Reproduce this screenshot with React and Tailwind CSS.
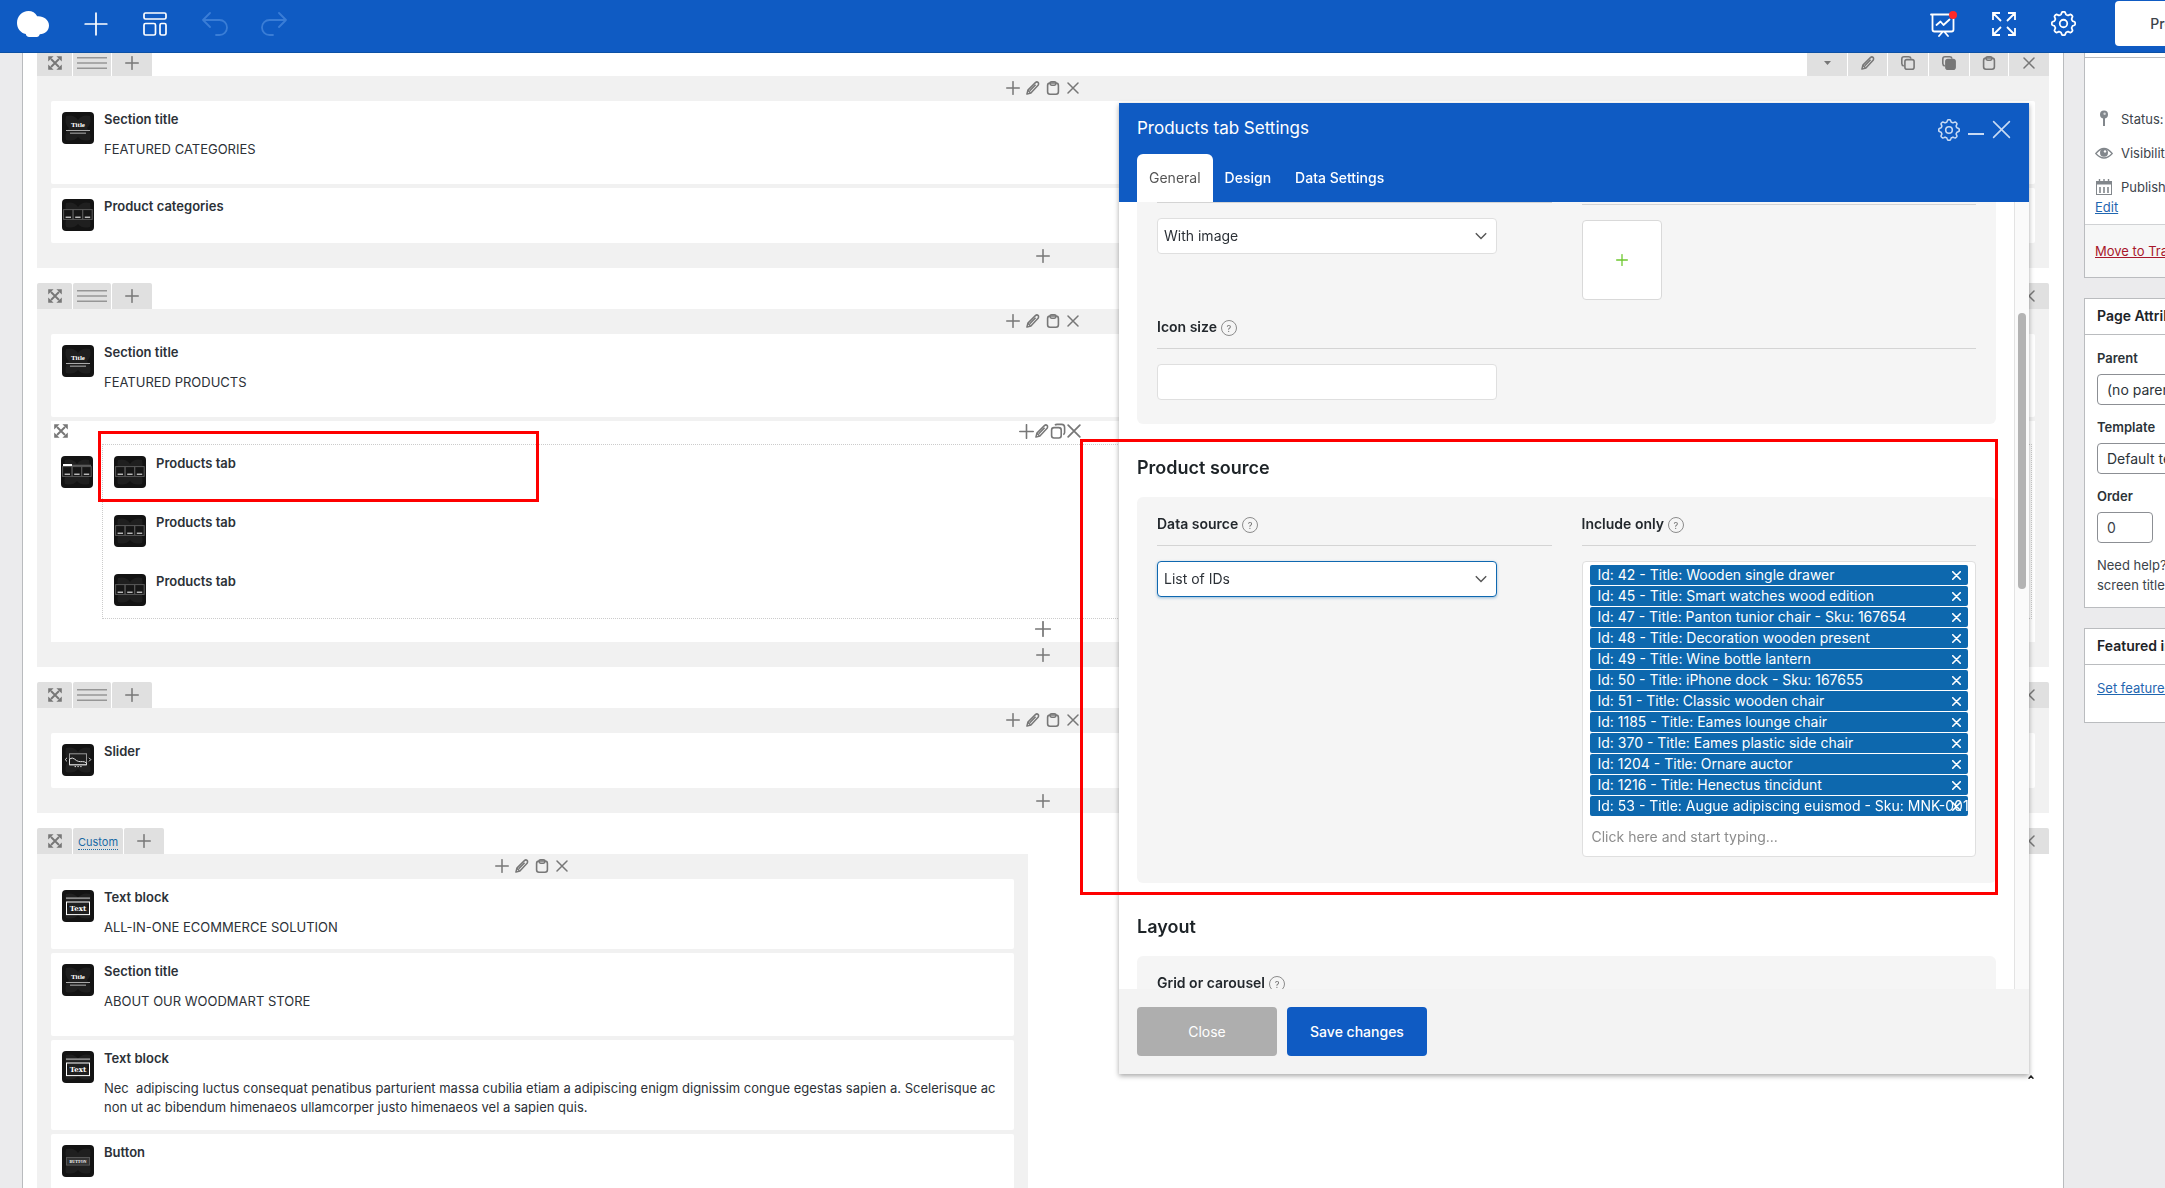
import React from 'react';

const PRODUCTS = [
  'Id: 42 - Title: Wooden single drawer',
  'Id: 45 - Title: Smart watches wood edition',
  'Id: 47 - Title: Panton tunior chair - Sku: 167654',
  'Id: 48 - Title: Decoration wooden present',
  'Id: 49 - Title: Wine bottle lantern',
  'Id: 50 - Title: iPhone dock - Sku: 167655',
  'Id: 51 - Title: Classic wooden chair',
  'Id: 1185 - Title: Eames lounge chair',
  'Id: 370 - Title: Eames plastic side chair',
  'Id: 1204 - Title: Ornare auctor',
  'Id: 1216 - Title: Henectus tincidunt',
  'Id: 53 - Title: Augue adipiscing euismod - Sku: MNK-001',
];

// Eight rounded teeth around a 24x24 box
const GEAR_PATH = (() => {
  const points = [];
  for (let i = 0; i < 96; i++) {
    const angle = (i / 96) * Math.PI * 2;
    const wave = Math.max(-0.75, Math.min(0.75, Math.cos(angle * 8) * 1.2));
    const r = 10 + wave * 1.6;
    points.push(`${(12 + r * Math.cos(angle)).toFixed(2)} ${(12 + r * Math.sin(angle)).toFixed(2)}`);
  }
  return `M${points.join('L')}Z`;
})();

function Gear({ className }) {
  return (
    <svg className={className} viewBox="0 0 24 24" fill="none" stroke="currentColor" strokeWidth="1.7" strokeLinejoin="round">
      <path d={GEAR_PATH} />
      <circle cx="12" cy="12" r="3.6" />
    </svg>
  );
}

function Plus({ className = 'size-[14px]' }) {
  return (
    <svg className={className} viewBox="0 0 14 14" stroke="currentColor" strokeWidth="1.5" strokeLinecap="round">
      <path d="M7 .7v12.6M.7 7h12.6" />
    </svg>
  );
}

function Cross({ className = 'size-3' }) {
  return (
    <svg className={className} viewBox="0 0 12 12" stroke="currentColor" strokeWidth="1.5" strokeLinecap="round">
      <path d="M1 1l10 10M11 1L1 11" />
    </svg>
  );
}

function Pencil({ className = 'size-[14px]' }) {
  return (
    <svg className={className} viewBox="0 0 14 14" fill="none" stroke="currentColor" strokeWidth="1.5" strokeLinejoin="round">
      <path d="M.9 13.1l1-4L9.4 1.6q1.5-1.3 2.6-.2t.1 2.9L4.900 12z" />
      <path d="M3.800 9.800l5.800-6M2 9.400l2.400 2.400" />
    </svg>
  );
}

function Clipboard({ className = 'size-[14px]' }) {
  return (
    <svg className={className} viewBox="0 0 14 14" fill="none" stroke="currentColor" strokeWidth="1.6">
      <rect x="1.6" y="2" width="10.8" height="11.2" rx="2.4" />
      <rect x="4" y=".8" width="6" height="3.4" rx="1.6" />
    </svg>
  );
}

function Copy({ filled }) {
  return (
    <svg className="size-[14px]" viewBox="0 0 14 14" fill="none" stroke="currentColor" strokeWidth="1.6">
      <path d="M2.8 10Q.8 9.6.8 7.6V3Q.8.8 3 .8h4.6Q9.6.8 10 2.6" />
      <rect x="3.9" y="3.6" width="9.2" height="9.6" rx="2" fill={filled ? 'currentColor' : 'none'} />
    </svg>
  );
}

function Stack() {
  return (
    <svg className="size-4" viewBox="0 0 16 16" fill="none" stroke="currentColor" strokeWidth="1.6">
      <rect x="1.6" y="4.6" width="9.6" height="10.4" rx="2.4" />
      <path d="M5 2.2Q5.6 1.4 7 1.4h4.6q3 0 3 3v5q0 1.6-1.4 2.2" />
    </svg>
  );
}

function Move() {
  return (
    <svg className="size-[14px]" viewBox="0 0 14 14" fill="currentColor" stroke="currentColor">
      <path d="M3 3l8 8M11 3l-8 8" strokeWidth="1.9" fill="none" />
      <path stroke="none" d="M.2.2h5.400L.2 5.600zM13.800.2v5.400L8.400.2zM.2 13.800V8.400l5.400 5.400zM13.800 13.800H8.400l5.400-5.400z" />
    </svg>
  );
}

function Chevron({ className }) {
  return (
    <svg className={className} viewBox="0 0 12 8" fill="none" stroke="currentColor" strokeWidth="1.4">
      <path d="M.8 1.2L6 6.6l5.2-5.4" />
    </svg>
  );
}

function Boxes({ y = 10 }) {
  return (
    <g>
      {[1.6, 11.2, 20.8].map((x) => (
        <g key={x}>
          <rect x={x} y={y + 0.6} width="9.4" height="9.8" fill="#161616" stroke="#5a5a5a" />
          <path d={`M${x + 2} ${y + 8.2}h5.4`} stroke="#eee" strokeWidth="1.1" />
        </g>
      ))}
    </g>
  );
}

function Tile({ kind }) {
  return (
    <svg className="size-8 shrink-0" viewBox="0 0 32 32" fill="none" aria-hidden="true">
      <rect width="32" height="32" rx="4" fill="#131313" />
      <path d="M4 4q8-2 12 4 4-6 12-4 2 8-3 12 5 6 3 12-8 2-12-3-4 5-12 3-2-6 3-12Q2 12 4 4z" fill="#1f1f1f" />
      {kind === 'title' && (
        <g>
          <text x="16" y="15" fontSize="7" fontWeight="700" textAnchor="middle" fill="#fff" fontFamily="Liberation Serif, serif">Title</text>
          <path d="M4 18.5h24" stroke="#aaa" />
          <path d="M8 21.2h16" stroke="#888" strokeWidth="1.4" />
        </g>
      )}
      {kind === 'products' && <Boxes />}
      {kind === 'tabs' && (
        <g>
          <path d="M11 9.4h19" stroke="#5a5a5a" strokeWidth="1.4" />
          <path d="M2 9h9" stroke="#fff" strokeWidth="2" />
          <Boxes />
        </g>
      )}
      {kind === 'slider' && (
        <g stroke="#ddd">
          <rect x="7.5" y="9.8" width="17" height="11" stroke="#999" />
          <path d="M7.5 15q3-2 5 0t4 2.4 4 .2 4 1.4M7.500 15v5.800h17v-2" />
          <path d="M5 13.800l-1.800 1.800L5 17.400M27 13.800l1.800 1.800-1.800 1.800" />
          <path d="M12.600 22.600h1.400M15.400 22.600h1.400M18.200 22.600h1.400" />
        </g>
      )}
      {kind === 'text' && (
        <g>
          <path d="M4 8.2h24" stroke="#888" strokeWidth="1.8" />
          <rect x="4.5" y="12" width="23" height="12.6" stroke="#fff" />
          <text x="16" y="21" fontSize="7" fontWeight="700" textAnchor="middle" fill="#fff" fontFamily="DejaVu Serif, serif">Text</text>
        </g>
      )}
      {kind === 'button' && (
        <g>
          <rect x="4.5" y="12.5" width="23" height="7.6" fill="#333" stroke="#555" />
          <text x="16" y="18" fontSize="4" fontWeight="700" textAnchor="middle" fill="#fff" fontFamily="Liberation Serif, serif">BUTTON</text>
        </g>
      )}
    </svg>
  );
}

function ControlButton({ label, className = '', children }) {
  return (
    <button type="button" aria-label={label} className={`flex h-[26px] items-center justify-center rounded-t-xs bg-[#e0e0e0] text-[#777] ${className}`}>
      {children}
    </button>
  );
}

function RowControls({ custom }) {
  return (
    <div className="flex justify-between">
      <div className="flex gap-px">
        <ControlButton label="Drag row" className="w-[35px]"><Move /></ControlButton>
        {custom ? (
          <ControlButton label="Custom layout" className="w-[50px]">
            <span className="mt-[2px] border-b border-dotted border-[#1a6aa5] text-[11px] leading-[14px] text-[#1a6aa5]">Custom</span>
          </ControlButton>
        ) : (
          <ControlButton label="Row layout" className="w-[38px]">
            <svg className="h-[14px] w-[30px]" viewBox="0 0 30 14" stroke="#969696" strokeWidth="1.4">
              <path d="M0 1.8h30M0 7h30M0 12.2h30" />
            </svg>
          </ControlButton>
        )}
        <ControlButton label="Add column" className="w-10"><Plus /></ControlButton>
      </div>
      <div className="flex gap-px">
        <ControlButton label="Toggle row" className="w-10">
          <svg className="h-1 w-[7px]" viewBox="0 0 7 4" fill="currentColor"><path d="M0 0h7L3.500 4z" /></svg>
        </ControlButton>
        <ControlButton label="Edit row" className="w-[39px]"><Pencil /></ControlButton>
        <ControlButton label="Clone row" className="w-10"><Copy /></ControlButton>
        <ControlButton label="Copy row" className="w-10"><Copy filled /></ControlButton>
        <ControlButton label="Paste" className="w-[38px]"><Clipboard /></ControlButton>
        <ControlButton label="Delete row" className="w-10"><Cross /></ControlButton>
      </div>
    </div>
  );
}

function Column({ children, open }) {
  return (
    <div className="bg-[#f1f1f1] px-[14px] text-[#777]">
      <div className="flex h-[25px] items-center justify-center gap-[6px] pr-[2px] pb-[2px]">
        <button type="button" aria-label="Prepend element"><Plus /></button>
        <button type="button" aria-label="Edit column"><Pencil /></button>
        <button type="button" aria-label="Paste into column"><Clipboard /></button>
        <button type="button" aria-label="Delete column" className="pl-px"><Cross /></button>
      </div>
      <div className="flex flex-col gap-1">{children}</div>
      <div className="flex h-[25px] items-center justify-center">
        {!open && <button type="button" aria-label="Append element"><Plus /></button>}
      </div>
    </div>
  );
}

function Element({ kind, title, text, className = '' }) {
  return (
    <div className={`flex gap-[10px] rounded-xs bg-white px-[11px] text-[13px] text-[#2c3137] ${className}`}>
      <div className="pt-[11px] pb-3"><Tile kind={kind} /></div>
      <div className="pt-2">
        <h4 className="leading-5 font-semibold">{title}</h4>
        {text && <p className="mt-[11px] leading-[19px]">{text}</p>}
      </div>
    </div>
  );
}

function ProductTabs() {
  return (
    <div className="bg-white px-[3px]">
      <div className="flex h-[23px] items-center pb-[3px]">
        <div className="flex flex-1"><Move /></div>
        <div className="flex items-center gap-px pl-[14px]">
          <Plus className="size-[15px]" />
          <Pencil className="size-[14px]" />
          <Stack />
          <Cross className="size-[14px]" />
        </div>
        <div className="flex-1" />
      </div>
      <div className="flex gap-[9px] pl-[7px]">
        <div className="pt-3"><Tile kind="tabs" /></div>
        <div className="flex flex-1 flex-col gap-1 border border-dotted border-[#ccc]">
          <Element kind="products" title="Products tab" />
          <Element kind="products" title="Products tab" />
          <Element kind="products" title="Products tab" />
        </div>
      </div>
      <div className="flex h-[23px] items-center justify-center pb-[3px]"><Plus className="size-4" /></div>
    </div>
  );
}

function TopBar() {
  return (
    <header className="relative z-10 flex h-[53px] shrink-0 items-center justify-between overflow-hidden border-b border-[#0b50a5] bg-[#0f5bc3] pb-[5px] text-white">
      <div className="flex items-center gap-[35px] pl-[17px]">
        <a href="#home" aria-label="Home">
          <svg className="h-[26px] w-8" viewBox="0 0 32 26" fill="#fff">
            <path d="M11.500 0c3.700 0 7 1.900 8.700 5.200C26 4.600 32 8.400 32 14.500c0 5-4 8.700-9.200 8.700-.5 1.600-1.500 2.800-3 2.800h-7.600c-2 0-3.200-1.200-3.400-2.900C3.800 22 0 17.500 0 12 0 5.300 5 0 11.500 0z" />
          </svg>
        </a>
        <button type="button" aria-label="Add element"><Plus className="size-6 [stroke-width:1]" /></button>
        <button type="button" aria-label="Templates">
          <svg className="size-6" viewBox="0 0 24 24" fill="none" stroke="currentColor" strokeWidth="1.7">
            <rect x="1" y="1" width="22" height="6" rx="1.5" />
            <rect x="1" y="11.500" width="11.500" height="11.500" rx="1.500" />
            <rect x="17" y="11.500" width="6" height="11.500" rx="1.500" />
          </svg>
        </button>
        <div className="flex gap-[33px] text-[#3a7dd6]">
          <button type="button" aria-label="Undo">
            <svg className="h-6 w-[26px]" viewBox="0 0 26 24" fill="none" stroke="currentColor" strokeWidth="1.8" strokeLinecap="round" strokeLinejoin="round">
              <path d="M8 1L1 8l7 7M1 8h16.500a7.500 7.500 0 0 1 0 15H14" />
            </svg>
          </button>
          <button type="button" aria-label="Redo">
            <svg className="h-6 w-[26px]" viewBox="0 0 26 24" fill="none" stroke="currentColor" strokeWidth="1.8" strokeLinecap="round" strokeLinejoin="round">
              <path d="M18 1l7 7-7 7M25 8H8.500a7.500 7.500 0 0 0 0 15H12" />
            </svg>
          </button>
        </div>
      </div>
      <div className="flex items-center gap-[35px]">
        <button type="button" aria-label="SEO">
          <svg className="h-[26px] w-[27px]" viewBox="0 0 27 26" fill="none" stroke="currentColor" strokeWidth="1.800" strokeLinecap="round" strokeLinejoin="round">
            <path d="M1 3.500h20M2.500 3.500v15q0 2 2 2h17q2 0 2-2V8M9 25l3.500-4M18 25l-3.500-4" />
            <path d="M6.500 14l4-3.500 3 3.500 6-5.500" />
            <circle cx="23" cy="4" r="4" fill="#ff2a2a" stroke="none" />
          </svg>
        </button>
        <button type="button" aria-label="Full screen">
          <svg className="size-6" viewBox="0 0 24 24" fill="none" stroke="currentColor" strokeWidth="1.800">
            <path d="M1 8V1h7M1 1l8 8M16 1h7v7M23 1l-8 8M1 16v7h7M1 23l8-8M23 16v7h-7M23 23l-8-8" />
          </svg>
        </button>
        <button type="button" aria-label="Page settings"><Gear className="size-[25px]" /></button>
        <div className="ml-1 w-[50px]">
          <button type="button" className="h-[45px] w-[124px] rounded-sm bg-white text-[14px] font-medium text-[#3c434a]">Preview</button>
        </div>
      </div>
    </header>
  );
}

function Label({ htmlFor, children }) {
  return (
    <div className="flex items-center gap-1 border-b border-[#d4d4d4] pb-3">
      <label htmlFor={htmlFor} className="text-[14px] leading-[18px] font-semibold text-[#23282d]">{children}</label>
      <span className="mt-[2px] flex size-4 items-center justify-center rounded-full border border-[#8c8c8c] text-[9px] leading-none font-medium text-[#777]">?</span>
    </div>
  );
}

function Select({ id, label, value, className = '' }) {
  return (
    <div className="relative w-[340px] max-w-full">
      <select id={id} aria-label={label} className={`h-9 w-full appearance-none rounded-sm border bg-white px-[6px] pb-px text-[14px] text-[#2c3137] ${className}`}>
        <option>{value}</option>
      </select>
      <Chevron className="pointer-events-none absolute top-[14px] right-[10px] h-2 w-3 text-[#555]" />
    </div>
  );
}

function SettingsModal() {
  return (
    <section role="dialog" aria-label="Products tab Settings" className="fixed top-[103px] right-[136px] bottom-[114px] z-20 flex w-[910px] flex-col bg-white shadow-[0_2px_5px_rgba(0,0,0,0.35)]">
      <div className="bg-[#0f5bc3] px-[18px] text-white">
        <div className="flex h-[51px] items-center justify-between pb-[2px]">
          <h2 className="text-[17px] leading-6">Products tab Settings</h2>
          <div className="flex items-center gap-2 pt-1 text-[#c8daf3]">
            <button type="button" aria-label="Settings"><Gear className="size-[22px]" /></button>
            <button type="button" aria-label="Minimize" className="mt-2 h-[2px] w-4 bg-current" />
            <button type="button" aria-label="Close"><Cross className="size-[19px] [stroke-width:1]" /></button>
          </div>
        </div>
        <div role="tablist" className="flex text-[14px] font-medium">
          <button type="button" role="tab" aria-selected="true" className="h-12 rounded-t-md bg-white px-3 pb-[2px] font-normal text-[#555]">General</button>
          <button type="button" role="tab" aria-selected="false" className="h-12 px-3 pb-[2px]">Design</button>
          <button type="button" role="tab" aria-selected="false" className="h-12 px-3 pb-[2px]">Data Settings</button>
        </div>
      </div>

      <div className="flex min-h-0 flex-1">
        <div className="min-w-0 flex-1 overflow-hidden px-[18px]">
          <div className="rounded-b-md bg-[#f5f5f5] px-5 pb-6">
            <div className="grid grid-cols-2 gap-[30px]">
              <div className="border-t border-[#d4d4d4] pt-[15px]">
                <Select label="Title icon" value="With image" className="border-[#dfdfdf]" />
              </div>
              <div className="pt-[2px]">
                <div className="border-t border-[#d4d4d4] pt-[15px]">
                  <button type="button" aria-label="Add image" className="flex size-20 items-center justify-center rounded-sm border border-[#d9d9d9] bg-white text-[#6dc72f]">
                    <Plus className="size-3" />
                  </button>
                </div>
              </div>
            </div>
            <div className="pt-[18px]">
              <Label htmlFor="icon-size">Icon size</Label>
              <input id="icon-size" type="text" className="mt-[15px] h-9 w-[340px] rounded-sm border border-[#dfdfdf] bg-white px-[6px] text-[14px]" />
            </div>
          </div>

          <h3 className="pt-8 pb-[17px] text-[18px] leading-6 font-semibold text-[#1d2327]">Product source</h3>
          <div className="grid grid-cols-2 gap-[30px] rounded-md bg-[#f5f5f5] px-5 pt-[18px] pb-[26px]">
            <div>
              <Label htmlFor="data-source">Data source</Label>
              <div className="pt-[15px]">
                <Select id="data-source" value="List of IDs" className="border-[#0f68b0] shadow-[0_1px_3px_rgba(15,104,176,0.4)]" />
              </div>
            </div>
            <div>
              <Label htmlFor="include-only">Include only</Label>
              <div className="mt-[15px] rounded-sm border border-[#dfdfdf] bg-white px-[7px] pt-[3px]">
                <ul className="flex flex-col gap-px">
                  {PRODUCTS.map((product) => (
                    <li key={product} className="relative flex h-5 items-center rounded-xs bg-[#0d68ae] pl-2 text-[14px] leading-5 whitespace-nowrap text-white">
                      {product}
                      <button type="button" aria-label="Remove" className="absolute top-[6px] right-[7px]">
                        <Cross className="size-[9px] [stroke-width:2.200]" />
                      </button>
                    </li>
                  ))}
                </ul>
                <input id="include-only" type="text" placeholder="Click here and start typing..." className="h-10 w-full px-[2px] text-[14px] placeholder:text-[#8c8c8c]" />
              </div>
            </div>
          </div>

          <h3 className="pt-8 pb-[17px] text-[18px] leading-6 font-semibold text-[#1d2327]">Layout</h3>
          <div className="rounded-md bg-[#f5f5f5] px-5 pt-[18px] pb-6">
            <Label htmlFor="grid-or-carousel">Grid or carousel</Label>
            <div className="pt-[15px]">
              <Select id="grid-or-carousel" value="Grid" className="border-[#dfdfdf]" />
            </div>
          </div>
        </div>
        <div className="w-[15px] border-l border-[#e3e3e3] bg-[#fafafa] px-[3px] pt-[111px]">
          <div className="h-[276px] rounded-full bg-[#b3b3b3]" />
        </div>
      </div>

      <div className="flex gap-[10px] bg-[#f3f3f3] px-[18px] py-[18px] text-[14px] text-white">
        <button type="button" className="h-[49px] w-[140px] rounded-sm bg-[#aeaeae]">Close</button>
        <button type="button" className="h-[49px] w-[140px] rounded-sm bg-[#0f5bc3] font-medium">Save changes</button>
      </div>
      <svg className="absolute -right-[5px] -bottom-[5px] h-1 w-[6px]" viewBox="0 0 6 4" fill="none" stroke="#222" strokeWidth="1.500"><path d="M.6 3.700L3 1l2.400 2.700" /></svg>
    </section>
  );
}

function SidebarSelect({ id, label, value }) {
  return (
    <div className="flex flex-col">
      <label htmlFor={id} className="mb-[6px] leading-5 font-semibold text-[#2c3338]">{label}</label>
      <select id={id} className="h-[31px] w-[254px] appearance-none rounded-sm border border-[#8c8f94] bg-white px-[9px] text-[14px] text-[#2c3338]">
        <option>{value}</option>
      </select>
    </div>
  );
}

function Sidebar() {
  return (
    <aside className="w-[101px] shrink-0 overflow-hidden pl-5 text-[13px] text-[#3c434a]">
      <div className="flex w-[280px] flex-col gap-5">
        <div className="border border-t-0 border-[#babcbf] bg-white">
          <div className="h-2 border-b border-[#babcbf]" />
          <div className="px-[10px] pt-[51px] pb-[7px] leading-5">
            <ul className="flex flex-col gap-[14px]">
              <li className="flex gap-2">
                <svg className="h-[18px] w-[18px]" viewBox="0 0 18 18" fill="#82878c"><circle cx="9" cy="5.500" r="4" /><path d="M8 9h2v8H8z" /><circle cx="9.600" cy="4.800" r="1.200" fill="#d5d7d9" /></svg>
                Status: Published
              </li>
              <li className="flex items-center gap-2">
                <svg className="h-[18px] w-[18px]" viewBox="0 0 18 18" fill="none" stroke="#82878c" strokeWidth="1.300"><path d="M.8 9.500Q9-.5 17.200 9.500 9 18.500.8 9.500z" /><circle cx="9" cy="8.800" r="4" fill="#82878c" stroke="none" /><circle cx="10" cy="7.400" r="1.200" fill="#fff" stroke="none" /></svg>
                Visibility: Public
              </li>
              <li className="flex items-center gap-2">
                <svg className="h-[18px] w-[18px]" viewBox="0 0 18 18" fill="none" stroke="#82878c"><rect x="1.500" y="3.500" width="15" height="13" /><path d="M1 5h16" strokeWidth="3" /><path d="M4.500 1v4M9 1v4M13.500 1v4" strokeWidth="1.400" /><path d="M5 9v6M9 9v6M13 9v6" strokeWidth="1.600" /></svg>
                Published on: Jul 5, 2021
              </li>
            </ul>
            <a href="#edit" className="text-[#1f66b0] underline">Edit</a>
          </div>
          <div className="border-t border-[#d0d2d4] bg-[#f6f7f7] px-[10px] py-4 leading-5">
            <a href="#trash" className="text-[#a8182b] underline">Move to Trash</a>
          </div>
        </div>

        <div className="border border-[#babcbf] bg-white">
          <h2 className="border-b border-[#babcbf] px-3 pt-[7px] pb-2 text-[14px] leading-5 font-semibold text-[#1d2327]">Page Attributes</h2>
          <div className="flex flex-col gap-3 px-3 pt-[13px] pb-3">
            <SidebarSelect id="parent" label="Parent" value="(no parent)" />
            <SidebarSelect id="template" label="Template" value="Default template" />
            <div className="flex flex-col">
              <label htmlFor="order" className="mb-[6px] leading-5 font-semibold text-[#2c3338]">Order</label>
              <input id="order" type="text" defaultValue="0" className="h-[31px] w-[56px] rounded-sm border border-[#8c8f94] bg-white px-[9px] text-[14px]" />
            </div>
            <p className="leading-5">Need help? Use the Help tab above the screen title.</p>
          </div>
        </div>

        <div className="border border-[#babcbf] bg-white">
          <h2 className="border-b border-[#babcbf] px-3 pt-[7px] pb-2 text-[14px] leading-5 font-semibold text-[#1d2327]">Featured image</h2>
          <div className="px-3 pt-[13px] pb-6 leading-5">
            <a href="#featured" className="text-[#1f66b0] underline">Set featured image</a>
          </div>
        </div>
      </div>
    </aside>
  );
}

export default function App() {
  return (
    <div className="relative flex h-screen flex-col overflow-hidden bg-[#ebebed] font-['Inter','Liberation_Sans',sans-serif]">
      <TopBar />
      <div className="-mt-[3px] flex min-h-0 flex-1 pl-[22px]">
        <main className="flex flex-1 flex-col gap-[15px] overflow-hidden border-x border-[#b9bbbe] bg-white px-[14px]">
          <div>
            <RowControls />
            <Column>
              <Element kind="title" title="Section title" text="FEATURED CATEGORIES" className="pb-[25px]" />
              <Element kind="products" title="Product categories" />
            </Column>
          </div>
          <div>
            <RowControls />
            <Column>
              <Element kind="title" title="Section title" text="FEATURED PRODUCTS" className="pb-[25px]" />
              <ProductTabs />
            </Column>
          </div>
          <div>
            <RowControls />
            <Column>
              <Element kind="slider" title="Slider" />
            </Column>
          </div>
          <div>
            <RowControls custom />
            <div className="w-[calc(50%-15px)]">
              <Column open>
                <Element kind="text" title="Text block" text="ALL-IN-ONE ECOMMERCE SOLUTION" className="pb-3" />
                <Element kind="title" title="Section title" text="ABOUT OUR WOODMART STORE" className="pb-[25px]" />
                <Element
                  kind="text"
                  title="Text block"
                  text={'Nec\u00a0 adipiscing luctus consequat penatibus parturient massa cubilia etiam a adipiscing enigm dignissim congue egestas sapien a. Scelerisque ac non ut ac bibendum himenaeos ullamcorper justo himenaeos vel a sapien quis.'}
                  className="pb-[13px]"
                />
                <Element kind="button" title="Button" />
              </Column>
            </div>
          </div>
        </main>
        <Sidebar />
      </div>
      <SettingsModal />
      {/* Highlight frames */}
      <div className="pointer-events-none absolute top-[431px] left-[98px] z-30 h-[71px] w-[441px] border-3 border-[#fe0000]" />
      <div className="pointer-events-none absolute top-[439px] right-[167px] z-30 h-[456px] w-[918px] border-3 border-[#fe0000]" />
    </div>
  );
}
